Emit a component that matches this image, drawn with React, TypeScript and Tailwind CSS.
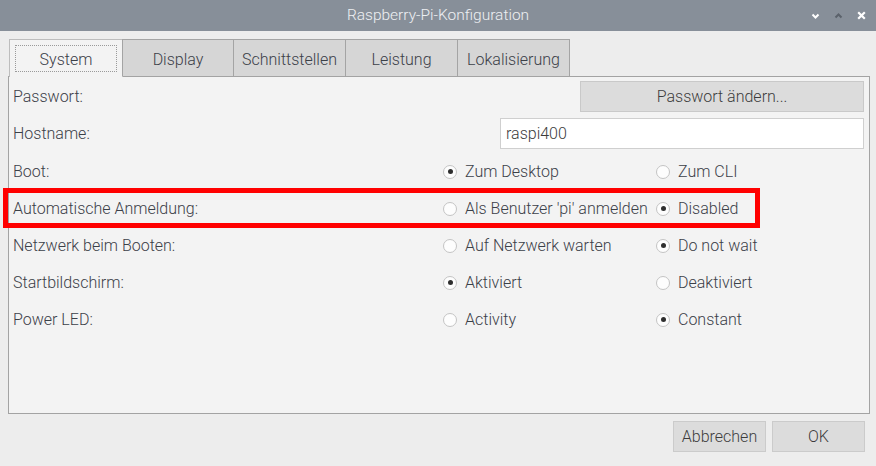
import React from "react"

const font = { fontFamily: "Roboto, 'Liberation Sans', sans-serif" }

const tabs = [
  { label: "System", width: "w-[114px]", active: true },
  { label: "Display", width: "w-[112px]" },
  { label: "Schnittstellen", width: "w-[113px]" },
  { label: "Leistung", width: "w-[113px]" },
  { label: "Lokalisierung", width: "w-[113px]" },
]

const radioRows = [
  { label: "Boot:", a: "Zum Desktop", b: "Zum CLI", checked: "a" },
  { label: "Automatische Anmeldung:", a: "Als Benutzer 'pi' anmelden", b: "Disabled", checked: "b" },
  { label: "Netzwerk beim Booten:", a: "Auf Netzwerk warten", b: "Do not wait", checked: "b" },
  { label: "Startbildschirm:", a: "Aktiviert", b: "Deaktiviert", checked: "a" },
  { label: "Power LED:", a: "Activity", b: "Constant", checked: "b" },
]

function Radio({ checked, label }: { checked: boolean; label: string }) {
  return (
    <div className="flex items-center">
      <div className="w-[14px] h-[14px] rounded-full border border-[#c4c4c4] bg-[#fdfdfd] flex items-center justify-center">
        {checked && <div className="w-[5px] h-[5px] rounded-full bg-[#2e2e2e]" />}
      </div>
      <span className="ml-[8px] whitespace-nowrap">{label}</span>
    </div>
  )
}

export default function App() {
  return (
    <div className="relative w-[876px] h-[466px] bg-[#ededed] text-[16px] font-light text-[#3b4048] flex flex-col" style={font}>
      {/* Titelleiste */}
      <div className="relative h-[31px] bg-[#878f99] flex items-center justify-center">
        <span className="text-[15.5px] text-[#eef0f3]">Raspberry-Pi-Konfiguration</span>
        <div className="absolute right-[10px] top-0 h-full flex items-center gap-[14px]">
          <svg width="9" height="8" viewBox="0 0 9 8">
            <path d="M1.5 2.5 L4.5 5.5 L7.5 2.5" stroke="#ffffff" strokeWidth="2" fill="none" />
          </svg>
          <svg width="9" height="8" viewBox="0 0 9 8">
            <path d="M1.5 5.5 L4.5 2.5 L7.5 5.5" stroke="#5b626b" strokeWidth="2" fill="none" />
          </svg>
          <svg width="9" height="9" viewBox="0 0 9 9">
            <path d="M1.2 1.2 L7.8 7.8 M7.8 1.2 L1.2 7.8" stroke="#ffffff" strokeWidth="2.2" fill="none" />
          </svg>
        </div>
      </div>

      <div className="pl-[8px] pr-[6px] pt-[8px]">
        {/* Reiter */}
        <div className="relative z-10 flex items-end pl-[1px]">
          {tabs.map((tab, i) =>
            tab.active ? (
              <div
                key={i}
                className={`${tab.width} h-[38px] -mb-px bg-[#f3f3f3] border border-b-0 border-[#bdbdbd] flex items-center justify-center p-[5px]`}
              >
                <div className="w-full h-full border border-dotted border-[#9a9a9a] flex items-center justify-center pt-[3px]">
                  {tab.label}
                </div>
              </div>
            ) : (
              <div
                key={i}
                className={`${tab.width} h-[37px] -ml-px bg-[#d6d6d6] border border-b-0 border-[#a4a4a4] flex items-center justify-center pt-[3px]`}
              >
                {tab.label}
              </div>
            )
          )}
        </div>

        {/* Inhalt */}
        <div className="h-[338px] bg-[#f3f3f3] border border-[#a3a3a3] pt-[4px] pl-[4px] pr-[5px]">
          <div className="h-[31px] flex items-center justify-between">
            <span>Passwort:</span>
            <div className="w-[284px] h-[31px] bg-[#dcdcdc] border border-[#c9c9c9] flex items-center justify-center text-[#3c3c3c]">
              Passwort ändern...
            </div>
          </div>
          <div className="h-[31px] mt-[6px] flex items-center justify-between">
            <span className="pt-[1px]">Hostname:</span>
            <div className="w-[364px] h-[31px] bg-white border border-[#cfcfcf] flex items-center pl-[5px] text-[#3c3c3c]">
              raspi400
            </div>
          </div>
          <div className="pt-[4px]">
            {radioRows.map((row, i) => (
              <div key={i} className="h-[37px] grid grid-cols-[430px_213px_1fr] items-center">
                <span>{row.label}</span>
                <Radio checked={row.checked === "a"} label={row.a} />
                <Radio checked={row.checked === "b"} label={row.b} />
              </div>
            ))}
          </div>
        </div>
      </div>

      {/* Schaltflächen */}
      <div className="flex justify-end gap-[6px] pr-[11px] mt-[7px]">
        <div className="w-[93px] h-[31px] bg-[#dcdcdc] border border-[#cbcbcb] flex items-center justify-center text-[#3c3c3c]">
          Abbrechen
        </div>
        <div className="w-[93px] h-[31px] bg-[#dcdcdc] border border-[#cbcbcb] flex items-center justify-center text-[#3c3c3c]">
          OK
        </div>
      </div>

      {/* Markierung */}
      <div className="absolute left-[3px] top-[188px] w-[757px] h-[40px] border-[5px] border-[#ff0000] pointer-events-none" />
    </div>
  )
}
